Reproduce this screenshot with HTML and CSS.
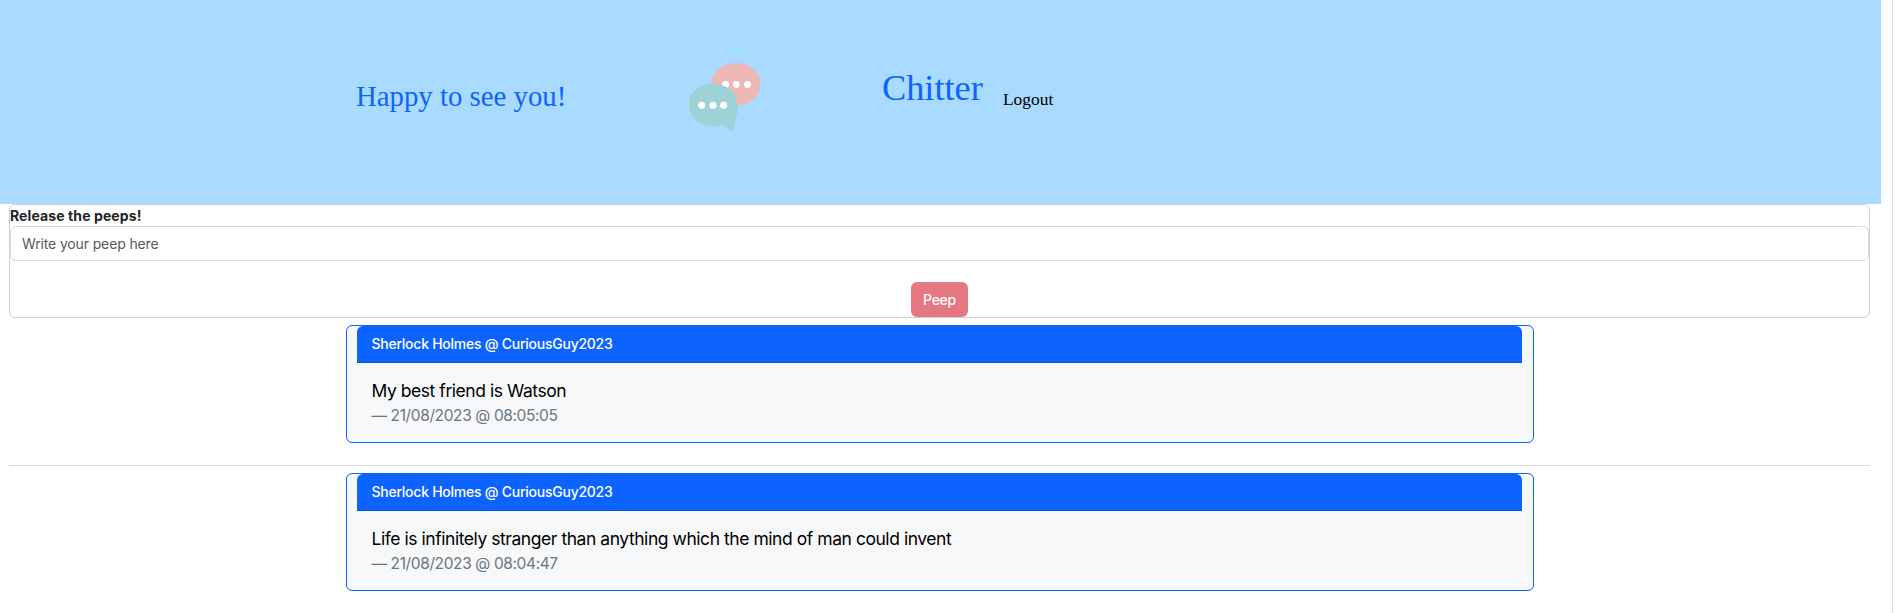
FILE: index.html
```html
<!DOCTYPE html>
<html lang="en">
<head>
<meta charset="utf-8">
<title>Chitter</title>
<link rel="stylesheet" href="styles.css">
</head>
<body>
<main class="page">
  <header class="banner">
    <span class="welcome">Happy to see you!</span>
    <svg class="logo" viewBox="0 0 72 69" width="72" height="69" aria-hidden="true">
      <path fill="#eeb8b7" d="M47.3 0C60 0 71.3 8.500 71.300 20.500C71.300 33 61.500 42.300 49 42.300C33 42.300 22.500 34 22.500 20.500C22.500 8.500 34 0 47.300 0Z"/>
      <g fill="#fff"><circle cx="36.700" cy="21.500" r="3.400"/><circle cx="47.300" cy="21.500" r="3.400"/><circle cx="58.500" cy="21.500" r="3.400"/></g>
      <path fill="#9dd3d6" d="M24 20.700C38 20.700 49 30 49 43.500C49 51 45.300 59 45 66.500C44.500 68.300 42.800 68.300 41.500 67.600C38 65.500 37.500 61.500 32 62.500C15 66.500 0 57 0 40.500C0 28.500 11 20.700 24 20.700Z"/>
      <g fill="#fff"><circle cx="12.700" cy="42.300" r="3.500"/><circle cx="24" cy="42.300" r="3.500"/><circle cx="34.600" cy="42.300" r="3.500"/></g>
    </svg>
    <span class="brand">Chitter</span>
    <a class="logout">Logout</a>
  </header>
  <form class="composer">
    <label class="composer-label" for="peep"><span>Release the peeps!</span></label>
    <input class="composer-input" id="peep" placeholder="Write your peep here">
    <button class="composer-button" type="button">Peep</button>
  </form>
  <article class="card">
    <div class="card-header"><span>Sherlock Holmes @ CuriousGuy2023</span></div>
    <p class="card-text"><span>My best friend is Watson</span></p>
    <p class="card-date"><span>— 21/08/2023 @ 08:05:05</span></p>
  </article>
  <hr class="divider">
  <article class="card">
    <div class="card-header"><span>Sherlock Holmes @ CuriousGuy2023</span></div>
    <p class="card-text"><span>Life is infinitely stranger than anything which the mind of man could invent</span></p>
    <p class="card-date"><span>— 21/08/2023 @ 08:04:47</span></p>
  </article>
</main>
<div class="gutter"></div>
</body>
</html>
```
FILE: styles.css
```css
* { box-sizing: border-box; }
body {
  margin: 0;
  height: 613px;
  display: flex;
  justify-content: space-between;
  overflow: hidden;
  background: #fff;
  color: #212529;
  font-family: Inter, "Liberation Sans", sans-serif;
  font-size: 14.7px;
}
.page { width: 1881px; }
.gutter {
  width: 3px;
  background: #fafafa;
  border-left: 1px solid #e0e0e0;
}
.banner {
  height: 204px;
  padding: 63px 0 0 356px;
  display: flex;
  align-items: flex-start;
  background: #a9daff;
  font-family: "Liberation Serif", serif;
  color: #0d63fd;
  line-height: 1;
  white-space: nowrap;
}
.welcome { width: 333px; padding-top: 19px; font-size: 28.800px; }
.logo { flex: none; }
.brand { width: 121px; margin-left: 121px; padding-top: 7px; font-size: 36.300px; }
.logout { padding-top: 28px; font-size: 17.400px; color: #000; }
.composer {
  height: 114px;
  margin: 0 11px 0 9px;
  display: flex;
  flex-direction: column;
  border: 1px solid #ced0d2;
  border-radius: 6px;
}
.composer-label {
  height: 21px;
  line-height: 22px;
  font-size: 14px;
  font-weight: 700;
  letter-spacing: 0.1px;
}
.composer-input {
  height: 35px;
  padding: 0 11px;
  border: 1px solid #d5dce2;
  border-radius: 6px;
  background: #fff;
  font: 14px/22px Inter, sans-serif;
  letter-spacing: -0.14px;
  color: #212529;
}
.composer-input::placeholder { color: #55595d; opacity: 1; }
.composer-button {
  align-self: center;
  width: 57px;
  height: 35px;
  margin-top: 21px;
  padding: 0;
  border: 0;
  border-radius: 6px;
  background: #e67881;
  color: #fff;
  font: 500 14px/22px Inter, sans-serif;
  letter-spacing: -0.3px;
}
.card {
  width: 1188px;
  height: 118px;
  margin: 7px 0 0 346px;
  padding: 0 11px 0 10px;
  border: 1px solid #0d63fd;
  border-radius: 6px;
  background: #f7f8fa;
}
.card-header {
  height: 37px;
  padding-left: 14.500px;
  border-bottom: 1px solid #0b55d9;
  border-radius: 6px 6px 0 0;
  background: #0d63fd;
  color: #fff;
  font-size: 14px;
  font-weight: 500;
  line-height: 36px;
  letter-spacing: -0.25px;
}
.card-text {
  margin: 15px 0 0 14.500px;
  color: #000;
  font-size: 17.500px;
  line-height: 26px;
  letter-spacing: -0.450px;
}
.card-date {
  margin: 0 0 0 14.500px;
  color: #6c757d;
  font-size: 15.500px;
  line-height: 23px;
  letter-spacing: -0.380px;
}
.divider {
  height: 1px;
  margin: 22px 11px 0 9px;
  border: 0;
  background: #d9dadb;
}
```
